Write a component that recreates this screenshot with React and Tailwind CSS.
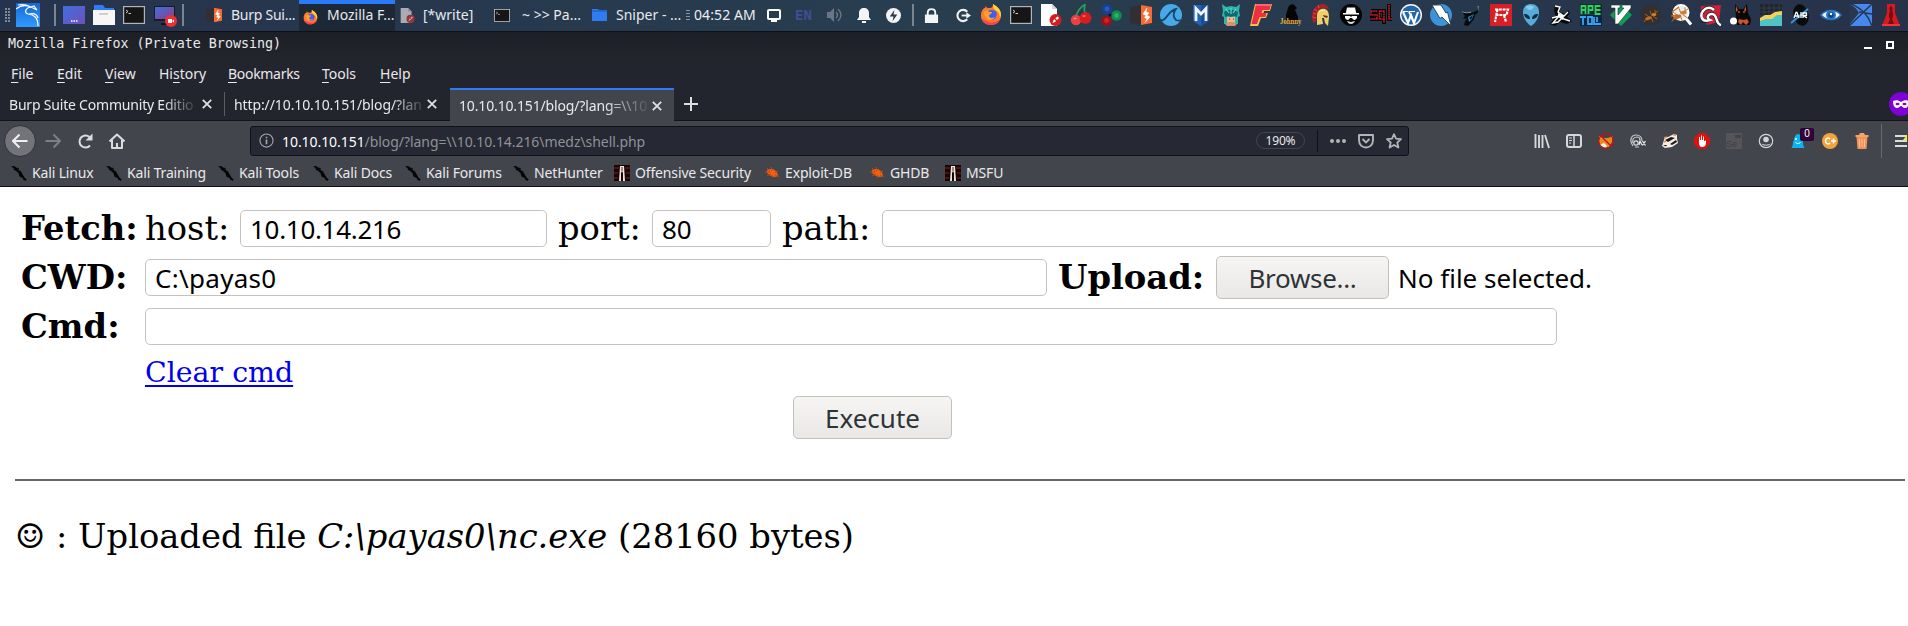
import React from "react";

const Svg = ({ s = 22, vb = "0 0 22 22", className = "", children }) => (
  <svg width={s} height={s} viewBox={vb} className={"block shrink-0 " + className} fill="none">
    {children}
  </svg>
);

/* ---------- shared artwork ---------- */
const Firefox = ({ s = 22 }) => (
  <Svg s={s}>
    <path d="M2 7C3 4 5 4 5 4c0-1 1-2 1-2 0 2 2 2 4 2 3 0 3-3 3-4 5 3 8 6 8 11 0 6-4 10-10 10S1 17 1 12c0-2 0-4 1-5z" fill="#ff7a2e" />
    <path d="M13 0c5 3 8 6 8 11l-1 3c0-6-4-7-6-9-1-2-1-4-1-5z" fill="#ffd23e" />
    <path d="M2 15c2 5 6 6 9 6 5 0 8-3 9-6-3 3-8 5-12 3-3-1-5-3-6-3z" fill="#ff3a55" />
    <circle cx="11.500" cy="11" r="5" fill="#3f5ff0" />
    <path d="M4 8c2-2 4-1 5 0l3 0c0 2-3 2-3 4 1 3 4 2 6 1-2 4-9 4-10-1-1-2-1-3-1-4z" fill="#ffa12b" />
    <path d="M11 6c3-1 6 2 5 6 2-3 0-7-5-6z" fill="#7a45d8" />
  </Svg>
);
const Terminal = ({ w = 22, h = 18 }) => (
  <svg width={w} height={h} viewBox="0 0 22 18" className="block shrink-0" preserveAspectRatio="none">
    <rect x=".6" y=".6" width="20.800" height="16.800" fill="#161616" stroke="#b4b4b4" strokeWidth="1.200" />
    <path d="M3 4l2 1.500L3 7M5.500 7.500h2.500" stroke="#d0d0d0" strokeWidth="1" fill="none" />
  </svg>
);
const Burp = ({ s = 22 }) => (
  <Svg s={s}>
    <path d="M0 3l11-2v20L0 19z" fill="#303034" />
    <path d="M11 1l11 2v16l-11 2z" fill="#f86a33" />
    <path d="M17 4l-4 6 3 1.500-1.500 2L17 15l-2 3.500L20 13l-3-1.500L19 9l-3-1.500z" fill="#fff" stroke="#fff" strokeWidth=".5" />
  </Svg>
);
const DocNo = ({ s = 22, gray }) => (
  <Svg s={s}>
    <path d="M1 0h11l5 5v17H1z" fill={gray ? "#a9adb3" : "#fff"} />
    <path d="M12 0v5h5z" fill={gray ? "#878c93" : "#d4d4d4"} />
    <circle cx="15.500" cy="16" r="6" fill={gray ? "#98323c" : "#d41c1c"} />
    <path d="M12.500 19l1-3 4-3.500 1.500 1.500-4 4z" fill={gray ? "#d1a9ae" : "#fff"} />
    <path d="M12 12l8 8" stroke={gray ? "#98323c" : "#d41c1c"} strokeWidth="1.300" />
  </Svg>
);

/* ---------- launcher icons ---------- */
const Cherry = () => (
  <Svg>
    <path d="M5 14C8 7 10 3 15 .5c-1 4-1 8 1 11" stroke="#23a05a" strokeWidth="1.700" />
    <circle cx="6" cy="16" r="5.200" fill="#ec4141" />
    <circle cx="15.500" cy="14" r="6" fill="#d61d20" />
    <ellipse cx="5" cy="14.500" rx="1.500" ry=".8" fill="#ff9090" />
    <ellipse cx="14" cy="12" rx="1.800" ry="1" fill="#f76363" />
  </Svg>
);
const Balls = () => (
  <Svg>
    <circle cx="7" cy="5.300" r="5.500" fill="#173f94" /><circle cx="7" cy="5" r="2.400" fill="#2c5bbb" />
    <circle cx="16.500" cy="11.500" r="5.300" fill="#0f8c4b" /><circle cx="16.500" cy="11.500" r="2.400" fill="#27b267" />
    <circle cx="6.500" cy="16.700" r="5.300" fill="#a01018" /><circle cx="6.500" cy="16.500" r="2.400" fill="#c9262b" />
    <circle cx="10" cy="11" r="1.500" fill="#13171d" />
  </Svg>
);
const Shark = () => (
  <Svg>
    <circle cx="11" cy="11" r="11" fill="#47a9e8" />
    <path d="M1 16.500c6 0 7-10 15-11.500-3 4-3 8 0 11 2 1 3 .5 5 .5" stroke="#174670" strokeWidth="1.800" />
  </Svg>
);
const Msf = () => (
  <Svg>
    <path d="M3 1h16v14c0 3-5 5-8 7-3-2-8-4-8-7z" fill="#2263b8" />
    <path d="M11 1h8v14c0 3-5 5-8 7z" fill="#174f9c" />
    <path d="M6 17V4.500L11 10l5-5.500V17" stroke="#f2f5fa" strokeWidth="2.800" />
  </Svg>
);
const Armitage = () => (
  <Svg>
    <path d="M2 0l4 3 5-1 5 1 4-3-1 7 1 5-2 1v7H4v-7l-2-1 1-5z" fill="#2fb5ab" />
    <path d="M7 13h8v4l-1 5H8l-1-5z" fill="#efb790" />
    <path d="M4 8c4-3 10-3 14 0l-1 5-3-1-3 1-3-1-3 1z" fill="#0c6a71" />
    <path d="M6 5l3 4M16 5l-3 4M11 4v6" stroke="#5bded0" strokeWidth="1.200" />
    <path d="M5 20l4-2h4l4 2-2 2H7z" fill="#d89169" />
    <path d="M9 15h1M13 15h1" stroke="#6b2f22" />
  </Svg>
);
const Faraday = () => (
  <Svg>
    <path d="M5 0h17l-2 7h-6l-.5 2H18l-2 5h-5l-3 8H0z" fill="#f3c14f" />
    <path d="M6 0h15l-1.500 6h-7l-1 3h5l-1 4H9.500L7 20H1.500z" fill="#ee2f43" />
    <path d="M6 0h15l-1 2H6z" fill="#ff6575" />
  </Svg>
);
const Johnny = () => (
  <Svg>
    <path d="M8 4c1-4 6-5 7-2l2 2-2 2 3 7v6H6v-8z" fill="#050505" />
    <text x="0" y="19.500" fontSize="9" fontWeight="bold" fill="#edb63c" fontFamily="Liberation Serif" textLength="21.500" lengthAdjust="spacingAndGlyphs">Johnny</text>
  </Svg>
);
const Spartan = () => (
  <Svg>
    <path d="M3 19C0 9 4 0 13 0c3 0 5 2 6 5l-7-1c-4 1-6 7-6 14z" fill="#a92027" />
    <path d="M4 5l3 2M3 9l3 1M2.500 13l4 1M8 1l1 3" stroke="#dd5149" strokeWidth=".9" />
    <path d="M7 12c0-6 4-8 8-7 3 1 4 4 4 8l-1 9-3-3-1-5h-2l1 6-6 1z" fill="#efce6c" />
    <path d="M13 11l5 1-1 2-3-1z" fill="#6b3616" />
    <path d="M9 8c2-2 4-2 6-1" stroke="#fff0ad" />
  </Svg>
);
const Spy = () => (
  <Svg>
    <circle cx="11" cy="11" r="11" fill="#050505" />
    <path d="M7 3.500h8l1.200 5.500H19v1.500H3V9h2.800zM5 12h5l1 1 1-1h5v2c-2 3-4 2-5 0h-2c-1 2-3 3-5 0z" fill="#fff" />
    <path d="M7 17c1 2 2 3 4 3s3-1 4-3l-4 1z" fill="#ddd" />
  </Svg>
);
const Sql = () => (
  <Svg>
    <path d="M1 7h6M1 7v4h6v4H0M15 15H9V7h5v13M19 0v15h3" stroke="#0c0405" strokeWidth="4" />
    <path d="M7 7H1v4h6v4H0M14 15H9.500V7H14v12M19 1v14h3" stroke="#c4202c" strokeWidth="1.500" strokeDasharray="1.700 .5" />
  </Svg>
);
const Wp = () => (
  <Svg>
    <circle cx="11" cy="11" r="11" fill="#f4f7fa" />
    <circle cx="11" cy="11" r="9.600" fill="#2265a8" />
    <path d="M3 8l5 11 3-8 3 8 4-11" stroke="#fff" strokeWidth="2.100" />
    <path d="M2.500 7.500h6M9 7.500h6" stroke="#fff" strokeWidth="1.200" />
    <path d="M9 8l5 11" stroke="#fff" strokeWidth="1.800" />
  </Svg>
);
const Zap = () => (
  <Svg>
    <circle cx="11" cy="11" r="11" fill="#3d93d8" />
    <path d="M2 1h9l5 8 1.500-1L21 22l-9-9-2 1.500z" fill="#fff" stroke="#1b3c57" strokeWidth=".9" />
  </Svg>
);
const Bull = () => (
  <Svg>
    <path d="M2 8c4 1.500 7 1 9 0M18 2c1 4 0 6-4 8" stroke="#9aa5ad" strokeWidth="1" />
    <path d="M2 8c3 2 6 1 9 1l3-1c4-1 4-3 4-5 1 4 0 6-3 8l-1 4-4 5-2 2-4-1 1-4 2-3-4 1 2-3z" fill="#07090c" />
    <path d="M8 13l6-3-2 5-3 3z" fill="#2a8fc4" /><path d="M9 14l4-3-2 5z" fill="#111820" />
  </Svg>
);
const RedR = () => (
  <Svg>
    <path d="M0 0h22v22H0z" fill="#d71f25" />
    <path d="M5 5.500h13l-1.500 5.500H5M7.500 5L5 18M14 11l2 7" stroke="#fff" strokeWidth="2.200" strokeDasharray="3 .8" />
  </Svg>
);
const Alien = () => (
  <Svg>
    <path d="M11 0c5 0 8 3 8 8 0 6-4 12-8 14C7 20 3 14 3 8c0-5 3-8 8-8z" fill="#58abd9" />
    <path d="M6 3c2-2 6-2 8 0-2 4-6 4-8 0z" fill="#86cdec" />
    <path d="M4 10c4 0 6 2 6 5-3 0-6-2-6-5zM18 10c-4 0-6 2-6 5 3 0 6-2 6-5z" fill="#0e2f43" />
  </Svg>
);
const Scorpion = () => (
  <Svg>
    <path d="M5 1l6 2-2 5 6 2 3-4 2 3-3 4 5 4-5 3-7-2-5 4-5-2 3-4-2-2 5-2-2-5z" fill="#090909" />
    <path d="M5 2l5 1-2 5 6 4 4-4M2 14l7-2 5 3 6 2M9 12l-6 7 5-1 4-4" stroke="#fff" strokeWidth="1.400" />
    <path d="M8 9l6 3-1 4-5-3z" fill="#fff" />
  </Svg>
);
const ApkTool = () => (
  <Svg>
    <path d="M0 0h22v10H0z" fill="#102d21" /><path d="M0 11h22v11H0z" fill="#082644" />
    <path d="M1.500 10V2h4v8M1.500 6h4M8.500 10V2h4v4h-4M20.500 2h-5v4h5M15.500 6v4h5" stroke="#30cf67" strokeWidth="1.800" />
    <path d="M0 13h6M3 13v8M8 13h4v7H8zM14 13v7h7M17 13v5" stroke="#35a5f3" strokeWidth="1.800" />
  </Svg>
);
const Vim = () => (
  <Svg>
    <path d="M11 0l11 11-11 11L0 11z" fill="#0e9c58" />
    <path d="M1 1h9v3H8v7l6-7h-2V1h9v3L8 20H5V4H1z" fill="#fff" stroke="#15332a" strokeWidth=".6" />
  </Svg>
);
const BugArt = () => (
  <>
    <ellipse cx="8.500" cy="14" rx="3.500" ry="1.600" fill="#c46a1c" transform="rotate(-20 9 14)" />
    <ellipse cx="14" cy="10.500" rx="2.400" ry="1.500" fill="#db7e27" />
    <path d="M9 13L5 10M12 12l-2-5M14 10l4-3M13 12l4 3M11 13l2 5M6 15l-2 3M15 9V6" stroke="#c46a1c" strokeWidth=".8" />
  </>
);
const Bug = () => (<Svg><circle cx="11" cy="11" r="10.500" fill="#33302f" /><BugArt /></Svg>);
const BugSearch = () => (
  <Svg>
    <circle cx="11" cy="8.500" r="7.500" fill="#e8ecef" stroke="#fff" strokeWidth="2" />
    <path d="M16 14.500l5 6" stroke="#fff" strokeWidth="3" />
    <g transform="translate(-3 -4) scale(1.200)"><BugArt /></g><path d="M2 8l7-5M1 12l7-1" stroke="#c46a1c" strokeWidth="1.300" />
  </Svg>
);
const Snake = () => (
  <Svg>
    <path d="M1 2l20-1-2 17L7 21 0 12z" fill="#ce2036" />
    <path d="M21 21C15 20 18 11 12 10c-4 0-6 4-2 6M10 16C0 20-1 11 3 7c3-4 8-4 11-1" stroke="#22252b" strokeWidth="4" />
    <path d="M21 21C15 20 18 10 12 10c-4 0-6 4-2 6C1 19 0 11 3 7c3-4 8-4 11-1" stroke="#fff" strokeWidth="2.500" />
  </Svg>
);
const Dog = () => (
  <Svg>
    <path d="M5 0l4 5h4l4-5 1 9 3 6-1 6H7l-1-8z" fill="#0a0909" />
    <path d="M6 2l2 4-2 2zM16 2l-2 4 2 2zM9 15l-1 3 3 3 2-3 3 3 3-3-2-3-3 1z" fill="#c6552c" />
    <circle cx="9" cy="8" r=".9" fill="#ef4637" /><circle cx="14" cy="8" r=".9" fill="#ef4637" />
    <circle cx="3.500" cy="17" r="3.500" fill="#fff" />
  </Svg>
);
const MapIcon = () => (
  <Svg>
    <path d="M0 0h22v11H0z" fill="#20252e" />
    <path d="M0 4h22M0 8h22M4 0v11M9 0v11M14 0v11M19 0v11" stroke="#46506a" strokeWidth=".5" />
    <path d="M0 14l5-3 5 0 5-3 7-1v15H0z" fill="#f2d05a" />
    <path d="M0 17l6-2 6 0 5-4 5 0v11H0z" fill="#4fc4c4" />
  </Svg>
);
const Air = () => (
  <Svg>
    <ellipse cx="11" cy="11" rx="7.500" ry="11" fill="#0a0b0d" transform="rotate(-14 11 11)" />
    <path d="M1 19L18 5" stroke="#3797d6" strokeWidth="2" />
    <path d="M4 14l2-5.500h1L9 14M5 12h3M11 8v6M13 14V9h3.500v2.500H13l4 2.500" stroke="#fff" strokeWidth="1.300" />
  </Svg>
);
const Eye = () => (
  <Svg>
    <path d="M1 11C6 5 16 5 21 11 16 17 6 17 1 11z" fill="#eaf3fb" stroke="#2c70b5" strokeWidth="1.600" />
    <circle cx="11" cy="11" r="5" fill="#2777c7" /><circle cx="11" cy="11" r="2.700" fill="#113d76" />
    <circle cx="11" cy="10" r="1.300" fill="#fff" />
  </Svg>
);
const BlueFan = () => (
  <Svg>
    <path d="M0 0h22v22H0z" fill="#4688ef" />
    <path d="M0 0v20l9-11C7 5 4 2 0 0z" fill="#29384f" />
    <path d="M0 0h3C9 2 12 6 14 10l8 3v9h-2C19 15 14 8 0 0z" fill="#4688ef" />
    <path d="M-1-1C12 4 19 11 22 23M9 8l13 2M23-1L-1 22" stroke="#29384f" strokeWidth="1.500" />
  </Svg>
);
const Flask = () => (
  <Svg>
    <path d="M7 0h8v9l5 13H2L7 9z" fill="#d71a20" />
    <path d="M11 2c2 1 2 3 1 5 2 3 1 6 0 8l2 5H8l2-5c-2-3-1-5 0-8-1-2-1-4 1-5z" fill="#790b12" />
    <path d="M2 20h18v2H2z" fill="#f13436" />
  </Svg>
);

const launchers = [
  Firefox, Terminal, DocNo, Cherry, Balls, Burp, Shark, Msf, Armitage, Faraday, Johnny, Spartan, Spy, Sql, Wp, Zap,
  Bull, RedR, Alien, Scorpion, ApkTool, Vim, Bug, BugSearch, Snake, Dog, MapIcon, Air, Eye, BlueFan, Flask,
];

const Grip = () => (
  <div className="grid w-[5px] grid-cols-2 gap-x-px gap-y-[1px]">
    {Array.from({ length: 10 }).map((_, i) => (
      <i key={i} className="block h-[2px] w-[2px] bg-[#7d8796]" />
    ))}
  </div>
);
const Kali = () => (
  <Svg s={24} vb="0 0 24 24">
    <defs><linearGradient id="kg" x1="0" y1="0" x2="0" y2="1"><stop stopColor="#1667d6" /><stop offset="1" stopColor="#2f9bff" /></linearGradient></defs>
    <path d="M0 0h24v24H0z" fill="url(#kg)" />
    <path d="M0 6c5-4 10-4 15-2l3-1 3 4-6-3M2 2c5-1 9 0 13 2M15 4c-6 1-7 6-3 7 6 1 10 3 10 12M13 11c5-1 8 0 9 4" stroke="#fff" strokeWidth="1.200" />
  </Svg>
);
const Desktop = ({ rec }) => (
  <Svg s={24} vb="0 0 24 24">
    <defs><linearGradient id={rec ? "dgr" : "dg"} x1="0" y1="0" x2="1" y2="1"><stop stopColor="#3f6fe0" /><stop offset="1" stopColor={rec ? "#8c3d86" : "#7050b8"} /></linearGradient></defs>
    {rec ? (
      <>
        <path d="M1 3h21v15H1z" fill="#1a1c22" /><path d="M2 4h19v12H2z" fill="url(#dgr)" /><path d="M8 20h9v2H8z" fill="#14161b" />
        <circle cx="18" cy="18" r="6" fill="#f0302f" /><path d="M15 16h4v4h-4zM19 18l2-1.500v3z" fill="#fff" />
      </>
    ) : (
      <><path d="M1 3h22v18H1z" fill="url(#dg)" /><path d="M9 18h1.500M11.500 18H13M14 18h1.500" stroke="#fff" strokeWidth="1.500" /></>
    )}
  </Svg>
);
const Folder = () => (
  <Svg s={22}>
    <path d="M1 1h9l2 3h9v6H1z" fill="#2f7df6" /><path d="M0 6h22v15H0z" fill="#f6f6f6" />
    <path d="M6 10h9" stroke="#a9a9a9" />
  </Svg>
);

const Sep = ({ className = "" }) => <i className={"block h-[22px] w-[2px] shrink-0 bg-[#7b8492] " + className} />;

const Task = ({ icon, label, className = "", text = "" }) => (
  <div className={"flex h-[31px] shrink-0 items-center overflow-hidden " + className}>
    <div className="flex w-[16px] shrink-0 justify-center">{icon}</div>
    <span className={"whitespace-nowrap text-[14px] leading-[30px] text-[#e6e9ed] " + text}>{label}</span>
  </div>
);

function Panel() {
  return (
    <div className="flex h-[31px] w-full items-center overflow-hidden bg-gradient-to-r from-[#26334c] via-[#283e4f] to-[#27324a] pb-px">
      <div className="flex w-[206px] shrink-0 items-center">
        <div className="w-[16px] shrink-0 pl-[5px]"><Grip /></div>
        <Kali />
        <Sep className="ml-[14px] mr-[6px]" />
        <div className="w-[31px]"><Desktop /></div>
        <div className="w-[30px]"><Folder /></div>
        <div className="w-[30px]"><Terminal /></div>
        <div className="w-[29px]"><Desktop rec /></div>
        <Sep />
      </div>
      <Task className="w-[93px]" icon={<Burp s={16} />} label="Burp Sui..." text="ml-[9px] tracking-[-0.25px]" />
      <Task className="w-[96px] border-t-4 border-[#2a7bfa] bg-[#1c2836] pl-[3px]" icon={<Firefox s={15} />} label="Mozilla F..." text="-mt-1 ml-[9px]" />
      <Task className="w-[98px] pl-[4px]" icon={<DocNo s={15} gray />} label="[*write]" text="ml-[8px]" />
      <Task className="w-[98px] pl-px" icon={<Terminal w={16} h={13} />} label="~ >> Pa..." text="ml-[12px]" />
      <Task className="w-[95px]" icon={<svg width="15" height="12" viewBox="0 0 15 12"><path d="M0 0h6l1 1h8v11H0z" fill="#2f7bf2" /><path d="M0 2h15" stroke="#1e56b5" /></svg>} label="Sniper - ..." text="ml-[9px]" />
      <div className="flex w-[8px] flex-col gap-[2px]"><i className="h-px w-[4px] bg-[#8b95a2]" /><i className="h-px w-[4px] bg-[#8b95a2]" /><i className="h-px w-[4px] bg-[#8b95a2]" /><i className="h-px w-[4px] bg-[#8b95a2]" /></div>
      <span className="w-[73px] shrink-0 whitespace-nowrap text-[14px] leading-[30px] tracking-[0.1px] text-[#eceef1]">04:52 AM</span>
      <div className="w-[28px] shrink-0">
        <svg width="14" height="13" viewBox="0 0 14 13" fill="none"><rect x="1" y="1" width="12" height="9" rx="1" stroke="#fff" strokeWidth="2" /><path d="M4 12h6" stroke="#fff" strokeWidth="2" /></svg>
      </div>
      <span className="w-[31px] shrink-0 font-['DejaVu_Sans_Mono',monospace] text-[14px] font-bold leading-[30px] text-[#414e92]">EN</span>
      <div className="w-[30px] shrink-0"><Svg s={16} vb="0 0 16 16"><path d="M1 5h3l4-4v14l-4-4H1z" fill="#6a7685" /><path d="M10 5c2 2 2 4 0 6M12 2c4 4 4 8 0 12" stroke="#6a7685" strokeWidth="1.400" /></Svg></div>
      <div className="w-[30px] shrink-0"><Svg s={16} vb="0 0 16 16"><path d="M8 1c3 0 5 2 5 5v4l2 3H1l2-3V6c0-3 2-5 5-5zM6 14h4v2H6z" fill="#f3f4f5" /></Svg></div>
      <div className="w-[26px] shrink-0"><Svg s={15} vb="0 0 16 16"><circle cx="8" cy="8" r="8" fill="#f3f4f5" /><path d="M9 2L4 9h4l-1 5 5-7H8z" fill="#263849" /></Svg></div>
      <Sep className="mr-[10px]" />
      <div className="w-[32px] shrink-0"><Svg s={15} vb="0 0 16 16"><path d="M1 7h14v9H1z" fill="#f3f4f5" /><path d="M4 8V5c0-5 8-5 8 0v3" stroke="#f3f4f5" strokeWidth="2" /></Svg></div>
      <div className="w-[20px] shrink-0"><Svg s={15} vb="0 0 16 16"><path d="M12 4A6 6 0 1 0 12 12" stroke="#f0f1f2" strokeWidth="2.200" /><path d="M6 8h7" stroke="#f0f1f2" strokeWidth="2" /><path d="M11 4.500l5 3.500-5 3.500z" fill="#f0f1f2" /></Svg></div>
      {launchers.map((I, i) => (
        <div key={i} className="flex w-[30px] shrink-0 justify-center"><I /></div>
      ))}
    </div>
  );
}

/* ---------- browser chrome ---------- */
const Menu = ({ pre = "", k, post, className }) => (
  <span className={className}>{pre}<span className="underline decoration-1 underline-offset-[3px]">{k}</span>{post}</span>
);
const X = () => (
  <Svg s={10} vb="0 0 10 10"><path d="M.8.800l8.400 8.400M9.200.800L.8 9.200" stroke="#e0e0e2" strokeWidth="1.800" /></Svg>
);
const KaliMark = () => (
  <Svg s={16} vb="0 0 16 16">
    <path d="M0 1.500l3-.5 3 2 1 1.500 3 2 2 3.500 1.500 2.500L16 15h-2.500l-2-2-3-1.500L7.500 8 4.500 5.500 3 5l-.5-2z" fill="#050505" />
    <path d="M6 3l2 1M12 14l3 1.500" stroke="#050505" strokeWidth="1" />
  </Svg>
);
const OffSec = () => (
  <Svg s={16} vb="0 0 16 16">
    <path d="M0 0h16v16H0z" fill="#1a0506" />
    <path d="M0 3h5M0 8h4M11 3h5M12 8h4M0 13h4M12 13h4" stroke="#7c2524" strokeWidth="1.200" />
    <path d="M6 1h4l1 15H9V8L8 6 7 8v8H5z" fill="#eee6dc" /><path d="M8 2v4" stroke="#4a2420" />
  </Svg>
);
const Exploit = () => (
  <Svg s={15} vb="0 0 15 15">
    <path d="M2 5l3-1 3 0 4 3 1 4-3 1-4-1-4-3z" fill="#f2600f" />
    <path d="M2 3l3 3M0 7h5M2 11l4-2M6 2l1 4M13 6l-3 2M14 12l-4-2M8 13l-1-3" stroke="#b34d16" strokeWidth="1" />
  </Svg>
);

const bookmarks = [
  { Icon: KaliMark, label: "Kali Linux", w: "w-[95px]" },
  { Icon: KaliMark, label: "Kali Training", w: "w-[112px]" },
  { Icon: KaliMark, label: "Kali Tools", w: "w-[95px]" },
  { Icon: KaliMark, label: "Kali Docs", w: "w-[92px]" },
  { Icon: KaliMark, label: "Kali Forums", w: "w-[108px]" },
  { Icon: KaliMark, label: "NetHunter", w: "w-[101px]" },
  { Icon: OffSec, label: "Offensive Security", w: "w-[151px]" },
  { Icon: Exploit, label: "Exploit-DB", w: "w-[105px]" },
  { Icon: Exploit, label: "GHDB", w: "w-[75px]" },
  { Icon: OffSec, label: "MSFU", w: "w-[75px]" },
];

const Fox = () => (
  <Svg s={16} vb="0 0 16 16"><path d="M1 3l5 2h4l5-2-1 6-3 5-4 1-4-1-2-5z" fill="#e88a1c" /><path d="M2 12l4-2 3 3-2 2z" fill="#fff" /><circle cx="8" cy="8" r="7.300" stroke="#c50e12" strokeWidth="1.200" /><path d="M3 3l10 10" stroke="#c50e12" strokeWidth="1.300" /></Svg>
);
const Goax = () => (
  <Svg s={16} vb="0 0 16 16"><path d="M3 13C-1 8 1 2 6 2s6 3 6 6M3 10C2 6 4 4 7 4s3 2 3 3M5 14h4" stroke="#c9c9cb" strokeWidth="1.200" /><circle cx="6" cy="10" r="2.200" stroke="#ddd" strokeWidth="1.200" /><path d="M9 12l1-4 2 4M12.500 8l3 4.500M15.500 8l-3 4.500" stroke="#eee" strokeWidth="1.200" /></Svg>
);
const Badger = () => (
  <Svg s={16} vb="0 0 16 16"><path d="M3 4l3 0 4-2 2-1 3 1v4l1 4-6 4-7 1-3-2z" fill="#f3ede6" /><path d="M3 7l6-3 4 1-7 4zM8 11l6-4 1 2-5 3zM1 12l4 0-1 1.500z" fill="#1c1a1a" /><path d="M2 5l3-1M11 1.500l3 1M2 9l2-1" stroke="#e09252" strokeWidth="1.400" /></Svg>
);
const Stop = () => (
  <Svg s={16} vb="0 0 16 16"><path d="M5 0h6l5 5v6l-5 5H5l-5-5V5z" fill="#e0110c" /><path d="M5 7V4h1v3h1V2.500h1V7h1V3.500h1V8h1l1-1v3c0 3-2 4-4 4s-3-2-3-4z" fill="#fff" /></Svg>
);
const Se = () => (
  <div className="relative flex h-4 w-4 items-end bg-[#555557]"><i className="absolute right-[1px] top-[2px] h-[3px] w-[6px] bg-[#414349]" /><span className="font-['Liberation_Sans',sans-serif] text-[9px] leading-[10px] text-[#3d3f45]">Se</span></div>
);
const Account = () => (
  <Svg s={16} vb="0 0 16 16"><circle cx="8" cy="8" r="6.700" stroke="#d5d5d7" strokeWidth="1.200" /><circle cx="8" cy="6.500" r="2.800" fill="#d5d5d7" /><path d="M3.500 10.500c2 1.500 7 1.500 9 0-1 3-8 3-9 0z" fill="#d5d5d7" /></Svg>
);
const Ghost = () => (
  <div className="relative">
    <Svg s={16} vb="0 0 16 16"><path d="M3 15c1-4 0-14 5-14s4 10 5 14l-2-1-1 1-2-1-2 1-1-1z" fill="#0cb3f3" /><path d="M1.500 15C3 13 3 10 3 8h10c0 2 0 5 1.500 7z" fill="#0cb3f3" /><path d="M5.500 9c1 2 4 2 5 0" stroke="#fff" strokeWidth="1" /><circle cx="6" cy="6" r="1" fill="#fff" /></Svg>
    <span className="absolute left-[10px] top-[-5px] h-[13px] w-[14px] rounded-[2px] bg-[#310038] text-center font-['Liberation_Sans',sans-serif] text-[10px] leading-[12px] text-white">0</span>
  </div>
);
const CPlus = () => (
  <Svg s={16} vb="0 0 16 16"><circle cx="8" cy="8" r="8" fill="#f2a33c" /><path d="M8 6C6 4 3.500 5.500 3.500 8S6 12 8 10M9 8h5M11.500 5.500v5" stroke="#fff" strokeWidth="1.500" /></Svg>
);
const Trash = () => (
  <Svg s={16} vb="0 0 16 16"><path d="M1.500 2H5l1-2h4l1 2h3.500v2h-13z" fill="#f4a46d" /><path d="M2.500 4h11l-1 12h-9z" fill="#f29254" /><path d="M5.500 6v8M8 6v8M10.500 6v8" stroke="#f9bf99" /></Svg>
);
const Library = () => (
  <Svg s={16} vb="0 0 16 16"><path d="M1.500 1v14M5 2v13M8.500 2v13M11 2l4 13" stroke="#d7d7d9" strokeWidth="1.900" /></Svg>
);
const Sidebar = () => (
  <Svg s={16} vb="0 0 16 16"><rect x="1" y="2" width="14" height="12" rx="2" stroke="#d7d7d9" strokeWidth="2" /><path d="M8 2v12" stroke="#d7d7d9" strokeWidth="1.500" /><path d="M3 5h3M3 7.500h3M3 10h2" stroke="#d7d7d9" strokeWidth="1" /></Svg>
);
const tools = [Library, Sidebar, Fox, Goax, Badger, Stop, Se, Account, Ghost, CPlus, Trash];

function Chrome() {
  return (
    <div className="border-t border-[#0f1116] bg-[#23252e] text-[14px] text-[#e9e9eb]">
      <div className="flex h-[26px] items-center justify-between bg-gradient-to-b from-[#1d1f26] to-[#23252e] pl-[8px] pr-[14px]">
        <span className="font-['DejaVu_Sans_Mono',monospace] text-[13.35px] leading-[24px] -mt-[2px]">Mozilla Firefox (Private Browsing)</span>
        <div className="flex items-end gap-[14px] pb-[6px] pt-[5px]"><i className="h-[2px] w-[8px] bg-white" /><i className="h-[8px] w-[8px] border-2 border-white" /></div>
      </div>
      <div className="flex h-[30px] items-center whitespace-nowrap pl-[11px] pt-[2px] leading-[28px]">
        <Menu className="w-[46px]" k="F" post="ile" />
        <Menu className="w-[48px]" k="E" post="dit" />
        <Menu className="w-[54px]" k="V" post="iew" />
        <Menu className="w-[69px]" pre="Hi" k="s" post="tory" />
        <Menu className="w-[94px] tracking-[-0.3px]" k="B" post="ookmarks" />
        <Menu className="w-[58px]" k="T" post="ools" />
        <Menu className="w-[40px]" k="H" post="elp" />
      </div>
      <div className="flex h-[33px] border-b border-[#131419]">
        <div className="flex w-[225px] items-center pl-[9px]">
          <span className="w-[193px] whitespace-nowrap tracking-[-0.2px] [mask-image:linear-gradient(to_right,#000_80%,transparent_98%)]">Burp Suite Community Editio</span><X />
          <i className="ml-auto h-[24px] w-px bg-[#5a5c64]" />
        </div>
        <div className="flex w-[225px] items-center pl-[9px]">
          <span className="w-[193px] whitespace-nowrap tracking-[-0.1px] [mask-image:linear-gradient(to_right,#000_82%,transparent_100%)]">http://10.10.10.151/blog/?lan</span><X />
        </div>
        <div className="-mb-px flex w-[224px] items-center border-t-2 border-[#2a7bfa] bg-[#43454c] pl-[9px]">
          <span className="w-[193px] whitespace-nowrap tracking-[-0.15px] [mask-image:linear-gradient(to_right,#000_75%,transparent_100%)]">10.10.10.151/blog/?lang=\\10</span><X />
        </div>
        <div className="flex flex-1 items-center justify-between pl-[10px]">
          <Svg s={14} vb="0 0 14 14"><path d="M7 0v14M0 7h14" stroke="#dededf" strokeWidth="2" /></Svg>
          <div className="h-[24px] w-[19px] overflow-hidden">
            <Svg s={24} vb="0 0 24 24"><circle cx="12" cy="12" r="12" fill="#8000d7" /><path d="M4 9c3-1 5-1 8 1 3-2 5-2 8-1 0 5-2 7-4 7s-3-2-4-2-2 2-4 2-4-2-4-7z" fill="#fff" /><ellipse cx="8.500" cy="12" rx="2" ry="1.300" fill="#8000d7" /><ellipse cx="15.500" cy="12" rx="2" ry="1.300" fill="#8000d7" /></Svg>
          </div>
        </div>
      </div>
      <div className="flex h-[39px] items-center bg-[#43454c]">
        <div className="ml-[4px] flex h-[32px] w-[32px] items-center justify-center rounded-full border border-[#2f3137] bg-[#737479]">
          <Svg s={16} vb="0 0 16 16"><path d="M15.500 8H1M7.500 1.500L1 8l6.500 6.500" stroke="#f0f0f1" strokeWidth="2" /></Svg>
        </div>
        <div className="ml-[9px]"><Svg s={16} vb="0 0 16 16"><path d="M.5 8H15M8.500 1.500L15 8l-6.500 6.500" stroke="#7d7f84" strokeWidth="2" /></Svg></div>
        <div className="ml-[16px]"><Svg s={16} vb="0 0 16 16"><path d="M13 12.500A6 6 0 1 1 12.500 4" stroke="#dcdcde" strokeWidth="2" /><path d="M15.500.500v7h-7z" fill="#dcdcde" /></Svg></div>
        <div className="ml-[16px]"><Svg s={16} vb="0 0 16 16"><path d="M.5 8.500L8 1.500l7.500 7M3 7v8h10V7" stroke="#dcdcde" strokeWidth="2" strokeLinejoin="round" /><path d="M7 10h2v5H7z" fill="#dcdcde" /></Svg></div>
        <div className="ml-[125px] flex h-[30px] w-[1159px] shrink-0 items-center rounded-[3px] border border-[#101116] bg-[#262833]">
          <div className="ml-[8px]"><Svg s={15} vb="0 0 16 16"><circle cx="8" cy="8" r="7" stroke="#a4a6ac" strokeWidth="1.200" /><path d="M8 7v5M8 4v1.600" stroke="#a4a6ac" strokeWidth="1.800" /></Svg></div>
          <span className="ml-[8px] flex-1 whitespace-nowrap pt-px tracking-[-0.06px] text-[#8f9198]"><span className="text-white">10.10.10.151</span>/blog/?lang=\\10.10.14.216\medz\shell.php</span>
          <span className="flex h-[17px] w-[49px] items-center justify-center rounded-full border border-[#44464f] text-[12px] tracking-[-0.2px]">190%</span>
          <i className="ml-[12px] h-[22px] w-px bg-[#101116]" />
          <div className="ml-[12px]"><Svg s={16} vb="0 0 16 16"><circle cx="2" cy="8" r="2" fill="#b3b4b7" /><circle cx="8" cy="8" r="2" fill="#b3b4b7" /><circle cx="14" cy="8" r="2" fill="#b3b4b7" /></Svg></div>
          <div className="ml-[12px]"><Svg s={16} vb="0 0 16 16"><path d="M1 2h14v5c0 10-14 10-14 0z" stroke="#b3b4b7" strokeWidth="1.900" strokeLinejoin="round" /><path d="M4.500 6L8 9.500 11.500 6" stroke="#b3b4b7" strokeWidth="1.900" /></Svg></div>
          <div className="ml-[12px] mr-[6px]"><Svg s={16} vb="0 0 16 16"><path d="M8 1.200l2 4.500 5 .5-3.700 3.300 1.100 5L8 12l-4.400 2.500 1.100-5L1 6.200l5-.5z" stroke="#b3b4b7" strokeWidth="1.800" strokeLinejoin="round" /></Svg></div>
        </div>
        <div className="ml-[117px] flex shrink-0">
          {tools.map((I, i) => (<div key={i} className="flex w-[32px] justify-center"><I /></div>))}
        </div>
        <i className="ml-[3px] h-[34px] w-px shrink-0 bg-[#696b71]" />
        <div className="ml-[13px] h-[20px] w-[12px] overflow-hidden"><svg width="16" height="20" viewBox="0 0 16 20" fill="none"><path d="M0 5h16M0 10h16M0 15h16" stroke="#dcdcde" strokeWidth="2" /><path d="M16-1L8 9h8z" fill="#fdf000" /></svg></div>
      </div>
      <div className="flex h-[27px] items-start border-b border-[#0e0f13] bg-[#43454c] pl-[11px]">
        {bookmarks.map(({ Icon, label, w }) => (
          <div key={label} className={"flex shrink-0 items-center gap-[5px] whitespace-nowrap leading-[25px] tracking-[-0.15px] " + w}><Icon />{label}</div>
        ))}
      </div>
    </div>
  );
}

/* ---------- page ---------- */
const box = "flex h-[37px] shrink-0 items-center rounded-[5px] border border-[#c6c3be] bg-white pl-[9px] font-['Noto_Sans',sans-serif] text-[26px] leading-none";
const btn = "flex h-[43px] shrink-0 items-center justify-center rounded-[5px] border border-[#c2c0bb] bg-gradient-to-b from-[#f6f5f4] to-[#e9e8e7] font-['Noto_Sans',sans-serif] text-[26px] leading-none text-[#2e3436]";

function Shell() {
  return (
    <div className="h-[439px] overflow-hidden bg-white pl-[15px] pt-[17px] font-['DejaVu_Serif',serif] text-[33.75px] leading-[47px] text-black">
      <div className="flex h-[49px] items-center whitespace-nowrap pl-[6px]">
        <b className="w-[124px]">Fetch:</b>
        <span className="w-[95px]">host:</span>
        <div className={box + " w-[307px] tracking-[-0.3px]"}>10.10.14.216</div>
        <span className="ml-[11px] w-[94px]">port:</span>
        <div className={box + " w-[119px]"}>80</div>
        <span className="ml-[11px] w-[100px]">path:</span>
        <div className={box + " w-[732px]"} />
      </div>
      <div className="flex h-[49px] items-center whitespace-nowrap pl-[6px]">
        <b className="w-[124px]">CWD:</b>
        <div className={box + " w-[902px] tracking-[0.3px]"}>C:\payas0</div>
        <b className="ml-[11px] w-[158px]">Upload:</b>
        <div className={btn + " w-[173px] tracking-[-0.3px]"}>Browse...</div>
        <span className="ml-[9px] font-['Noto_Sans',sans-serif] text-[26px] leading-none">No file selected.</span>
      </div>
      <div className="flex h-[49px] items-center whitespace-nowrap pl-[6px]">
        <b className="w-[124px]">Cmd:</b>
        <div className={box + " w-[1412px]"} />
      </div>
      <div className="h-[45px] pl-[130px] text-[28.4px] leading-[43px] text-[#0000ee]"><span className="underline decoration-[1.500px] underline-offset-[3px]">Clear cmd</span></div>
      <div className="pl-[778px]"><div className={btn + " w-[159px]"}>Execute</div></div>
      <div className="mr-[3px] mt-[40px] h-[2px] bg-[#666]" />
      <div className="mt-[32px] whitespace-nowrap">☺ : Uploaded file <i>C:\payas0\nc.exe</i> (28160 bytes)</div>
    </div>
  );
}

export default function App() {
  return (
    <div className="h-[626px] w-[1908px] overflow-hidden bg-white font-['Noto_Sans',sans-serif]">
      <Panel />
      <Chrome />
      <Shell />
    </div>
  );
}
